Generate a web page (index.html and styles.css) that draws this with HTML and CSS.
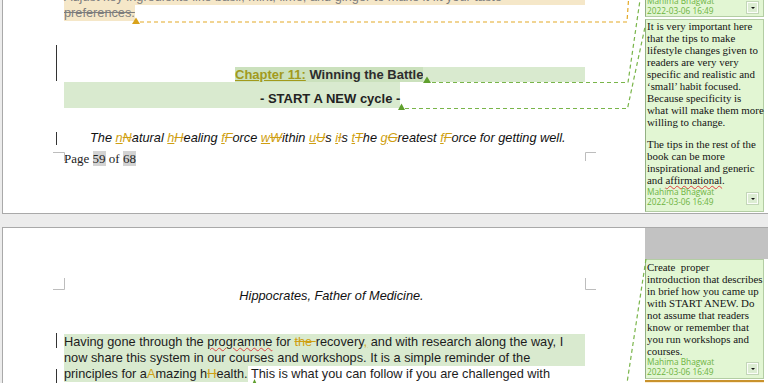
FILE: index.html
```html
<!DOCTYPE html>
<html lang="en">
<head>
<meta charset="utf-8">
<title>Document review</title>
<link rel="stylesheet" href="styles.css">
</head>
<body>
<div class="doc">
  <section class="page page1">
    <div class="body">
      <div class="inner">
        <div class="del-line del-full"><span class="del-text">Adjust key ingredients like basil, mint, lime, and ginger to make it fit your taste</span></div>
        <div class="del-line"><span class="del-bg"><span class="del-text">preferences.</span></span></div>
        <div class="h-line1"><span class="h-text"><span class="ins-olive">Chapter 11:</span> Winning the Battle</span><span class="h-fill"></span></div>
        <div class="h-line2"><span class="h2-band">- START A NEW cycle -</span></div>
        <p class="ital">The <span class="ins">n</span><span class="del">N</span>atural <span class="ins">h</span><span class="del">H</span>ealing <span class="ins">f</span><span class="del">F</span>orce <span class="ins">w</span><span class="del">W</span>ithin <span class="ins">u</span><span class="del">U</span>s <span class="ins">i</span><span class="del">I</span>s <span class="ins">t</span><span class="del">T</span>he <span class="ins">g</span><span class="del">G</span>reatest <span class="ins">f</span><span class="del">F</span>orce for getting well.</p>
        <p class="footer">Page <span class="field">59</span> of <span class="field">68</span></p>
      </div>
    </div>
    <aside class="markup">
      <div class="cmt cmt-cut">
        <div class="cmt-foot">
          <div class="meta"><div>Mahima Bhagwat</div><div>2022-03-06 16:49</div></div>
          <span class="btn"></span>
        </div>
      </div>
      <div class="cmt cmt-main">
        <div class="cmt-text">
          <p>It is very important here<br>that the tips to make<br>lifestyle changes given to<br>readers are very very<br>specific and realistic and<br>‘small’ habit focused.<br>Because specificity is<br>what will make them more<br>willing to change.</p>
          <p>The tips in the rest of the<br>book can be more<br>inspirational and generic<br>and <span class="wavy">affirmational</span>.</p>
        </div>
        <div class="cmt-foot">
          <div class="meta"><div>Mahima Bhagwat</div><div>2022-03-06 16:49</div></div>
          <span class="btn"></span>
        </div>
      </div>
    </aside>
  </section>

  <section class="page page2">
    <div class="body">
      <div class="inner2">
        <p class="quote">Hippocrates, Father of Medicine.</p>
        <div class="para">
          <div class="band-line">Having gone through the <span class="wavy">programme</span> for <span class="del">the </span>recovery<span class="ins">,</span> and with research along the way, I</div>
          <div class="band-line">now share this system in our courses and workshops. It is a simple reminder of the</div>
          <div class="plain-line"><span class="band">principles for a<span class="gold">A</span>mazing h<span class="del">H</span>ealth.</span> This is what you can follow if you are challenged with</div>
        </div>
      </div>
    </div>
    <aside class="markup">
      <div class="gray-block"></div>
      <div class="cmt cmt-p2">
        <div class="cmt-text">
          <p>Create&nbsp; proper<br>introduction that describes<br>in brief how you came up<br>with START ANEW. Do<br>not assume that readers<br>know or remember that<br>you run workshops and<br>courses.</p>
        </div>
        <div class="cmt-foot">
          <div class="meta"><div>Mahima Bhagwat</div><div>2022-03-06 16:49</div></div>
          <span class="btn"></span>
        </div>
      </div>
      <div class="cmt-next"></div>
    </aside>
  </section>
</div>

<svg class="overlay" width="768" height="383" viewBox="0 0 768 383" aria-hidden="true">
  <g fill="none" stroke-width="1.2" stroke-dasharray="4 3">
    <polyline stroke="#e3a927" points="140,22 627,22 628.5,0"/>
    <polyline stroke="#79b54a" points="432,82.5 628,82.5 640,0"/>
    <polyline stroke="#79b54a" points="405,108.5 627.5,108.5 645,27"/>
    <polyline stroke="#79b54a" points="646,259 627,383"/>
  </g>
  <polygon fill="#d9a21a" points="132,24 136,17.5 140,24"/>
  <polygon fill="#5f9f2d" points="423,83 427,76.5 431,83"/>
  <polygon fill="#5f9f2d" points="398,110 401.5,103.5 405,110"/>
  <polygon fill="#5f9f2d" points="251,387 254.5,379 258,387"/>
  <g stroke="#333" stroke-width="1">
    <line x1="56.5" y1="45" x2="56.5" y2="81"/>
    <line x1="56.5" y1="132" x2="56.5" y2="145"/>
    <line x1="56.5" y1="333" x2="56.5" y2="348"/>
    <line x1="56.5" y1="369" x2="56.5" y2="383"/>
  </g>
  <g stroke="#bdbdbd" stroke-width="1" fill="none">
    <polyline points="53,152.5 64.5,152.5 64.5,161"/>
    <polyline points="596,152.5 585.5,152.5 585.5,161"/>
    <polyline points="64.5,278 64.5,289.5 53,289.5"/>
    <polyline points="585.5,278 585.5,289.5 596,289.5"/>
  </g>
</svg>
</body>
</html>
```

FILE: styles.css
```css
html, body {
  margin: 0;
  height: 383px;
  overflow: hidden;
}
body {
  background: #ececec;
  font-family: "Liberation Sans", Arial, sans-serif;
  color: #1e1e1e;
  position: relative;
}
.doc {
  display: flex;
  flex-direction: column;
  gap: 13px;
}
.page {
  display: flex;
  margin-left: 2px;
  border-left: 1px solid #a9a9a9;
  background: #fff;
}
.page1 {
  height: 213px;
  border-bottom: 1px solid #a9a9a9;
}
.page2 {
  border-top: 1px solid #a9a9a9;
  height: 220px;
}
.body {
  width: 642px;
  flex: none;
  padding: 0 60px 0 61px;
  box-sizing: border-box;
  overflow: hidden;
}
.markup {
  flex: 1;
  display: flex;
  flex-direction: column;
  overflow: hidden;
}

/* page 1 body */
.inner {
  margin-top: -11px;
  font-size: 12.75px;
}
.del-line {
  height: 16px;
  line-height: 16px;
  white-space: nowrap;
}
.del-full {
  background: #f5e7c8;
}
.del-bg {
  display: inline-block;
  background: #f5e7c8;
}
.del-text {
  color: #7d7d7d;
  text-decoration: line-through;
}
.h-line1 {
  margin-top: 46px;
  height: 15px;
  line-height: 15px;
  display: flex;
  padding-left: 171px;
  font-size: 13px;
  font-weight: bold;
  color: #2d2d2d;
}
.h-text {
  background: #cbe1bd;
  white-space: nowrap;
}
.ins-olive {
  color: #a29a1c;
  text-decoration: underline;
}
.h-fill {
  flex: 1;
  background: #d9eacf;
}
.h-line2 {
  display: flex;
  height: 26px;
  font-size: 13px;
  font-weight: bold;
  color: #222;
}
.h2-band {
  background: #d9eacf;
  padding: 9px 0 0 196px;
  line-height: 16px;
  white-space: nowrap;
}
.ital {
  margin: 22px 0 0;
  padding-left: 26px;
  line-height: 16px;
  font-style: italic;
  color: #111;
  white-space: nowrap;
}
.ins {
  color: #cf9f12;
  text-decoration: underline;
}
.del {
  color: #cf9f12;
  text-decoration: line-through;
}
.gold {
  color: #cf9f12;
}
.footer {
  margin: 5px 0 0;
  line-height: 16px;
  font-family: "Liberation Serif", "Times New Roman", serif;
  font-size: 13px;
  color: #222;
}
.field {
  background: #d3d3d3;
}

/* comments */
.cmt {
  background: #e2f6d3;
  border: 1px solid #b3cda3;
  border-left-color: #93b083;
  margin-right: 4px;
  box-sizing: border-box;
  display: flex;
  flex-direction: column;
  flex: none;
}
.cmt-text {
  padding: 0 2px 0 1px;
  font-family: "Liberation Serif", "Times New Roman", serif;
  font-size: 10.9px;
  line-height: 12px;
  color: #141414;
  white-space: nowrap;
}
.cmt-text p {
  margin: 0;
}
.cmt-text p + p {
  margin-top: 10px;
}
.wavy {
  text-decoration: underline wavy #e04040;
  text-decoration-thickness: 1px;
  text-underline-offset: 1px;
}
.cmt-foot {
  display: flex;
  align-items: flex-end;
  justify-content: space-between;
  padding: 0 5px 0 1px;
}
.meta {
  font-family: "Open Sans", "Liberation Sans", sans-serif;
  font-size: 8.3px;
  line-height: 9.5px;
  color: #6db33f;
  white-space: nowrap;
}
.btn {
  width: 9px;
  height: 9px;
  margin-bottom: 2px;
  border: 1px solid #fbfdf9;
  box-shadow: 0 0 0 1px #c3d6b8;
  background: #dcedd2;
  display: flex;
  align-items: center;
  justify-content: center;
}
.btn::after {
  content: "";
  border-left: 2px solid transparent;
  border-right: 2px solid transparent;
  border-top: 2px solid #111;
}
.cmt-cut {
  margin-top: -23px;
  height: 40px;
  justify-content: flex-end;
  padding-bottom: 1px;
}
.cmt-main {
  margin-top: 2px;
  height: 193px;
}
.cmt-main .cmt-foot {
  margin-top: 1px;
}

/* page 2 */
.inner2 {
  font-size: 12.75px;
  padding-top: 60px;
}
.quote {
  margin: 0;
  line-height: 16px;
  text-align: center;
  padding-left: 14px;
  font-style: italic;
  color: #111;
}
.para {
  margin-top: 30px;
  line-height: 16px;
  color: #1c1c1c;
  white-space: nowrap;
}
.band-line {
  background: #d9eacf;
  height: 16px;
}
.plain-line {
  height: 16px;
}
.band {
  display: inline-block;
  background: #d9eacf;
}
.gray-block {
  height: 31px;
  flex: none;
  background: #c2c2c2;
}
.cmt-p2 {
  height: 120px;
  margin-bottom: 1px;
}
.cmt-p2 .cmt-text {
  padding-top: 1px;
}
.cmt-next {
  height: 20px;
  flex: none;
  margin-right: 4px;
  border-top: 2px solid #c9922c;
  background: #fbecd3;
}

.overlay {
  position: absolute;
  top: 0;
  left: 0;
  pointer-events: none;
}
```
